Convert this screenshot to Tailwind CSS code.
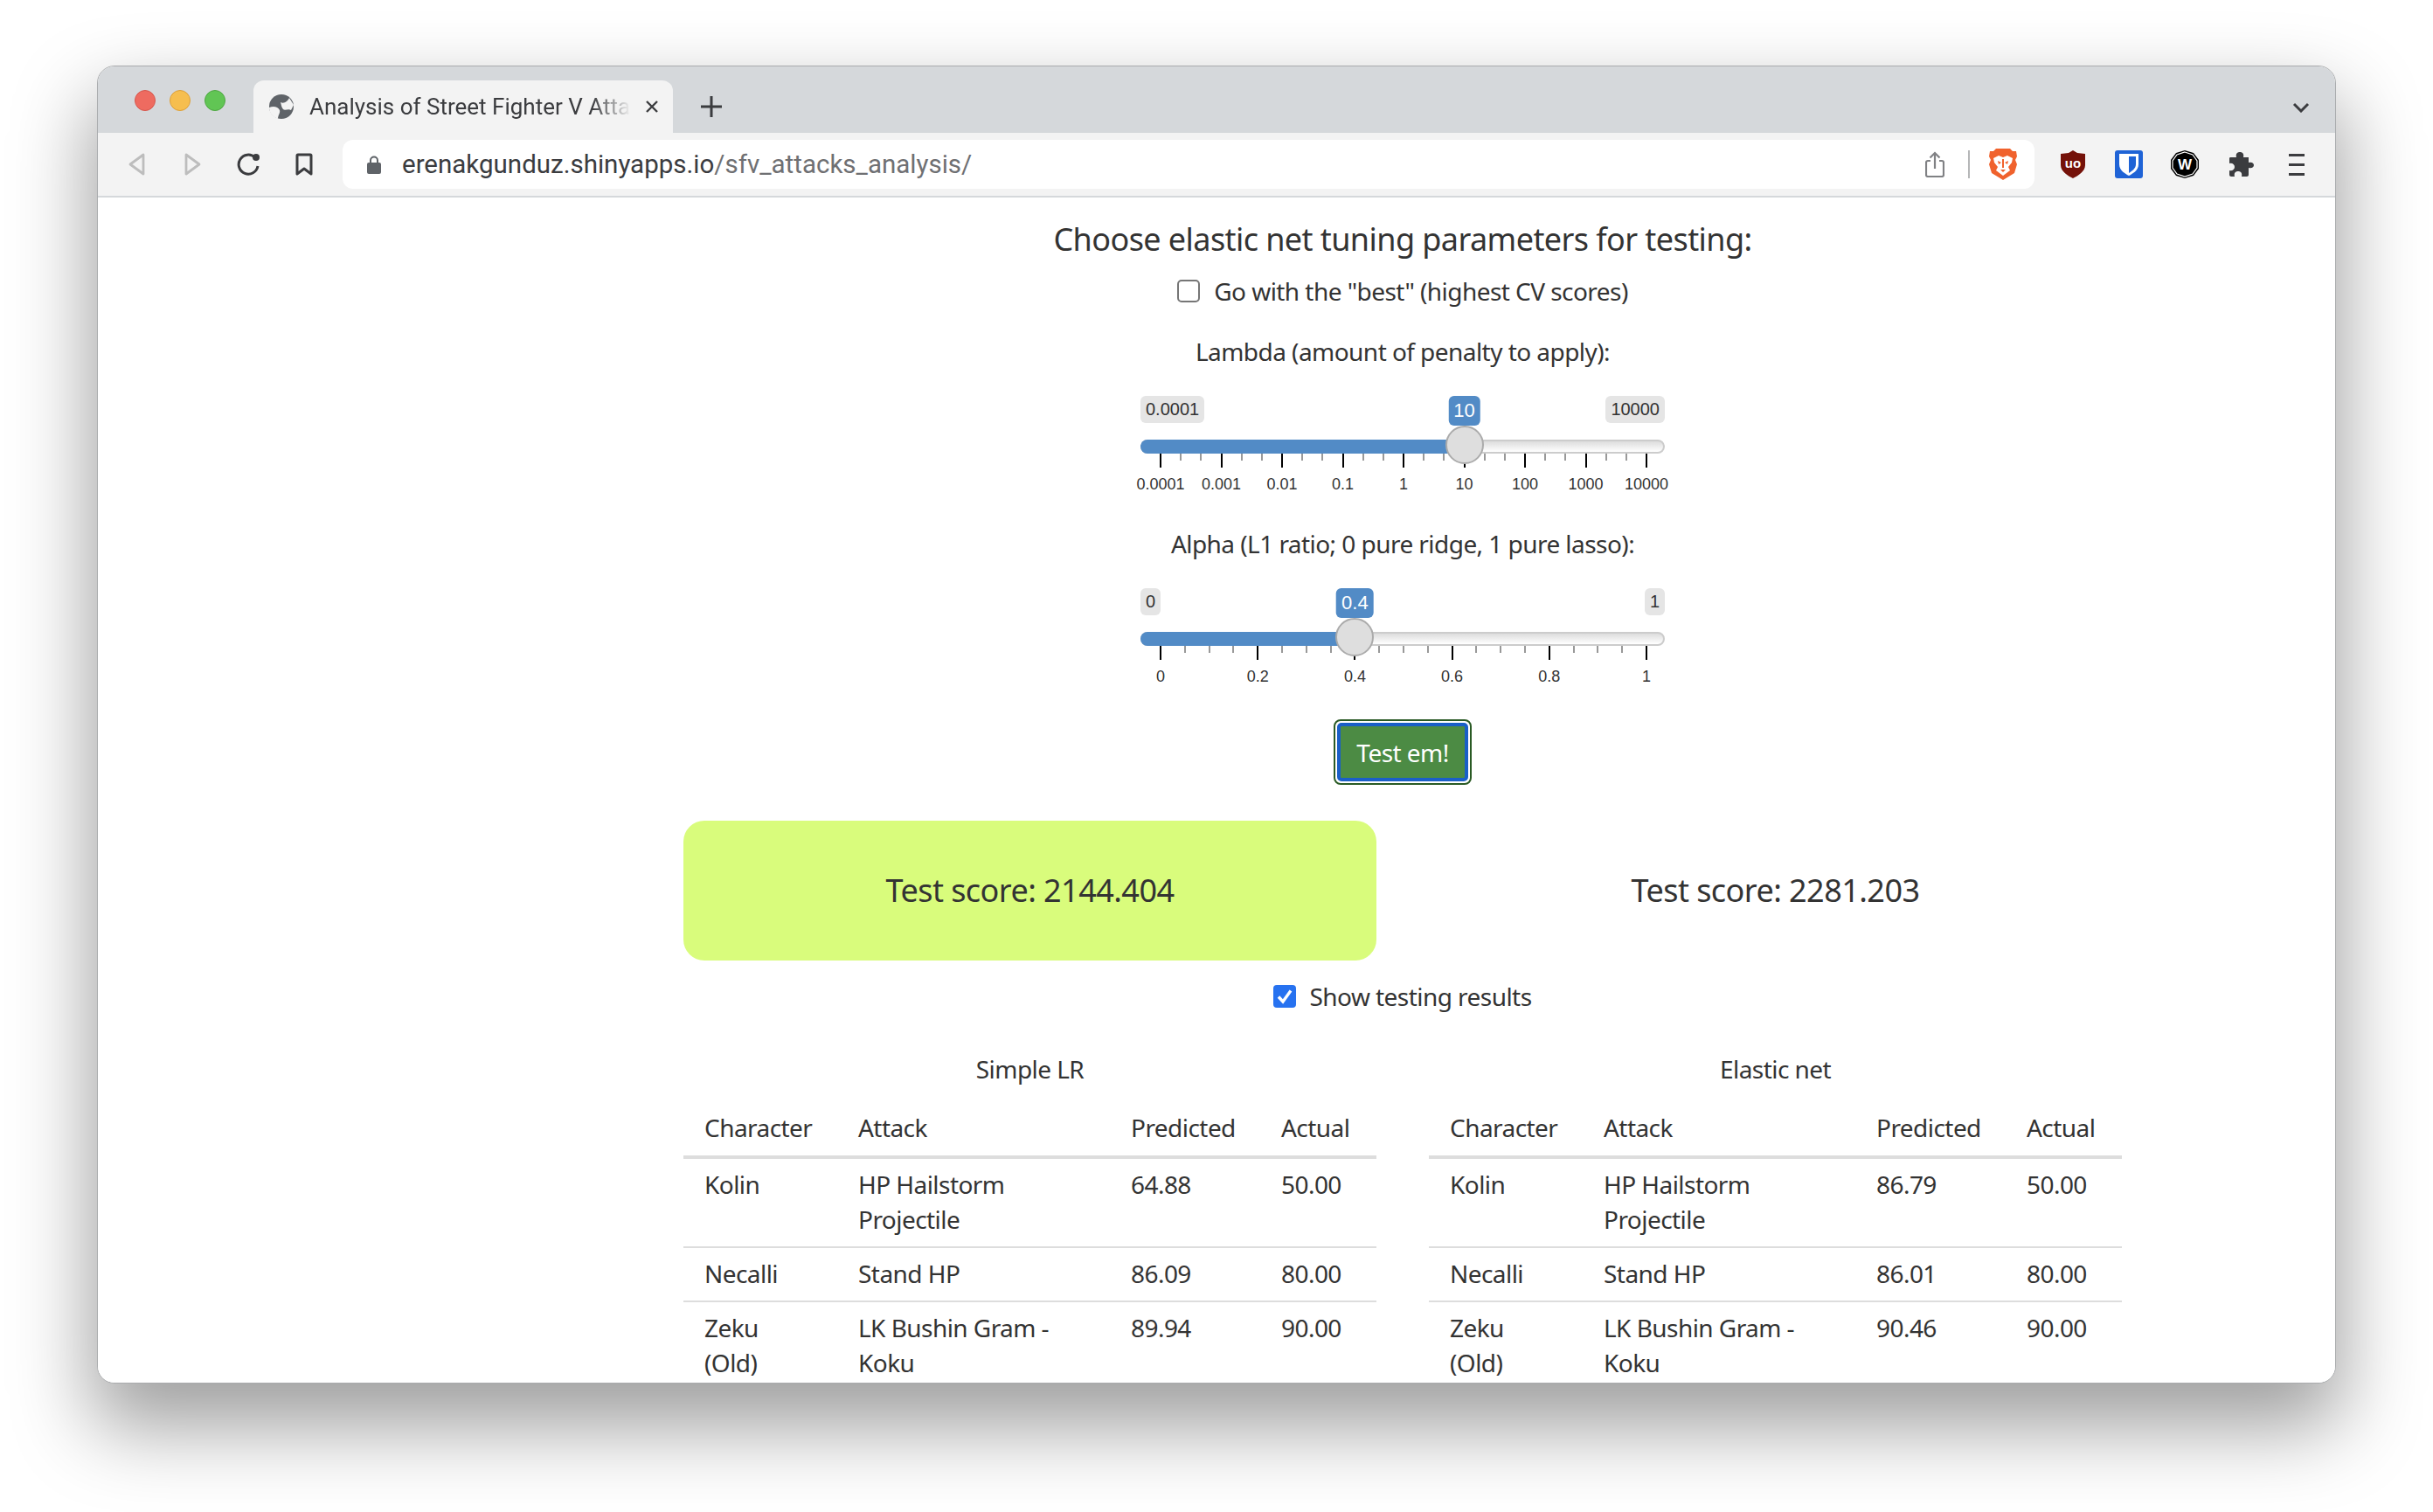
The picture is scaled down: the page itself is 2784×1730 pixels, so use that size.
<!DOCTYPE html>
<html lang="en">
<head>
    <meta charset="UTF-8">
    <title>Analysis of Street Fighter V Attacks</title>
    <script src="https://cdn.jsdelivr.net/npm/@tailwindcss/browser@4"></script>
</head>
<body class="bg-white w-[2784px] h-[1730px] overflow-hidden pt-[75px] pl-[111px]">
    <div class="w-[2562px] h-[1508px] flex flex-col rounded-[20px] overflow-hidden border border-[#a9abad] bg-white shadow-[0_44px_90px_6px_rgba(0,0,0,0.38)]">

        <!-- tab strip -->
        <div class="h-[76px] shrink-0 bg-[#d5d8db] flex items-end font-['Roboto',sans-serif]">
            <div class="flex items-center gap-4 w-[122px] h-[24px] pl-[42px] shrink-0 self-start mt-[27px]">
                <span class="w-6 h-6 rounded-full shrink-0 bg-[#ee6b60] border border-[#d5574d]"></span>
                <span class="w-6 h-6 rounded-full shrink-0 bg-[#f6be4f] border border-[#dda03a]"></span>
                <span class="w-6 h-6 rounded-full shrink-0 bg-[#61c554] border border-[#4fa643]"></span>
            </div>
            <div class="ml-[56px] w-[480px] h-[60px] bg-[#f3f3f3] rounded-t-[12px] flex items-center pl-[18px] pr-[16px] text-[#3b3c3f] text-[26px] shrink-0">
                <svg class="w-[28px] h-[28px] shrink-0" viewBox="0 0 28 28">
                    <circle cx="14" cy="14" r="14" fill="#5f6368"/>
                    <path d="M13 9 C17 11 21 8 23 4 L28 12 L25 18 C22 16 18 19 16 17 C14 15 14 12 13 9Z" fill="#f3f3f3"/>
                    <path d="M0 15 C5 13 10 14 12 18 C13 21 10 24 10 28 L6 26 C3 24 0 20 0 15Z" fill="#f3f3f3"/>
                </svg>
                <span class="ml-[18px] w-[368px] whitespace-nowrap [mask-image:linear-gradient(to_right,black_88%,transparent)]">Analysis of Street Fighter V Atta</span>
                <svg class="w-4 h-4 ml-auto shrink-0" viewBox="0 0 16 16"><path d="M2 2 14 14M14 2 2 14" stroke="#3b3c3f" stroke-width="2.4"/></svg>
            </div>
            <svg class="w-6 h-6 ml-[32px] mb-[18px] shrink-0" viewBox="0 0 24 24"><path d="M12 0V24M0 12H24" stroke="#3b3c3f" stroke-width="3"/></svg>
            <svg class="w-[20px] h-[12px] ml-auto mr-[29px] mb-[23px] shrink-0" viewBox="0 0 20 12"><path d="M2 2 10 10 18 2" fill="none" stroke="#3b3c3f" stroke-width="3"/></svg>
        </div>

        <!-- toolbar -->
        <div class="h-[74px] shrink-0 bg-[#f3f3f3] border-b-2 border-[#d5d8db] flex items-center">
            <div class="w-[280px] h-full flex items-center shrink-0">
                <svg class="ml-[35px] w-[19px] h-[26px]" viewBox="0 0 19 26"><path d="M17 2V24L2 13Z" fill="none" stroke="#bdbdbd" stroke-width="2.8" stroke-linejoin="round"/></svg>
                <svg class="ml-[45px] w-[19px] h-[26px]" viewBox="0 0 19 26"><path d="M2 2V24L17 13Z" fill="none" stroke="#bdbdbd" stroke-width="2.8" stroke-linejoin="round"/></svg>
                <svg class="ml-[41px] w-[26px] h-[26px]" viewBox="0 0 26 26"><path d="M20.8 5.2 A11 11 0 1 0 24 15" fill="none" stroke="#3b3c3f" stroke-width="3"/><circle cx="22" cy="5" r="4" fill="#3b3c3f"/></svg>
                <svg class="ml-[41px] w-[20px] h-[26px]" viewBox="0 0 20 26"><path d="M2 3Q2 2 3 2H17Q18 2 18 3V24L10 18 2 24Z" fill="none" stroke="#3b3c3f" stroke-width="3" stroke-linejoin="round"/></svg>
            </div>
            <div class="w-[1936px] h-[56px] bg-white rounded-[12px] flex items-center shrink-0 pr-[20px]">
                <svg class="ml-[28px] w-[16px] h-[21px] shrink-0" viewBox="0 0 16 21"><path d="M4 9V5.5a4 4 0 0 1 8 0V9" fill="none" stroke="#5f6368" stroke-width="2"/><rect x="0" y="8" width="16" height="13" rx="2" fill="#5f6368"/></svg>
                <span class="ml-[24px] text-[29.5px] whitespace-nowrap font-['Roboto',sans-serif] text-[#3b3c3f]">erenakgunduz.shinyapps.io<span class="text-[#6f7073]">/sfv_attacks_analysis/</span></span>
                <svg class="ml-auto w-[22px] h-[30px]" viewBox="0 0 22 30"><path d="M6 11H3a2 2 0 0 0-2 2V27a2 2 0 0 0 2 2H19a2 2 0 0 0 2-2V13a2 2 0 0 0-2-2H16M11 20V2M5.500 7.500 11 2 16.500 7.500" fill="none" stroke="#808184" stroke-width="2.200"/></svg>
                <span class="ml-[27px] w-[2px] h-[32px] bg-[#b5b6b7]"></span>
                <svg class="ml-[22px] w-[32px] h-[36px]" viewBox="0 0 32 36">
                    <path d="M8 0H24L27 3 31 3 32 9 30 13 32 18 29 28 16 36 3 28 0 18 2 13 0 9 1 3 5 3Z" fill="#f0622d"/>
                    <path d="M5 11 11 8 16 10 21 8 27 11 26 16 22 21 24 25 16 31 8 25 10 21 6 16Z" fill="#fff"/>
                    <path d="M10 14 14 16 11 18ZM22 14 18 16 21 18ZM13 24H19L16 27ZM15 12H17V22H15Z" fill="#f0622d"/>
                </svg>
            </div>
            <svg class="ml-[30px] w-[28px] h-[32px] shrink-0" viewBox="0 0 28 32"><path d="M14 0 19 3 28 4V17C28 24 20 29 14 32 8 29 0 24 0 17V4L9 3Z" fill="#741109"/><text x="14" y="20" text-anchor="middle" font-family="Liberation Sans" font-weight="700" font-size="15" fill="#fff">uo</text></svg>
            <svg class="ml-[34px] w-[32px] h-[32px] shrink-0" viewBox="0 0 32 32"><rect width="32" height="32" rx="3" fill="#1f63d6"/><path d="M5 4H27V16C27 23 20 27 16 29 12 27 5 23 5 16Z" fill="#fff"/><path d="M16 7H24V16C24 21 19 24 16 26Z" fill="#1f63d6"/></svg>
            <svg class="ml-[32px] w-[32px] h-[32px] shrink-0" viewBox="0 0 32 32"><path d="M16 0 26 3 32 11V21L26 29 16 32 6 29 0 21V11L6 3Z" fill="#000"/><path d="M16 2 25 5 30 12V20L25 27 16 30 7 27 2 20V12L7 5Z" fill="none" stroke="#fff" stroke-width="1.200"/><text x="16" y="22" text-anchor="middle" font-family="Liberation Sans" font-weight="700" font-size="17" fill="#fff">W</text></svg>
            <svg class="ml-[34px] w-[29px] h-[28px] shrink-0" viewBox="0 0 29 28"><path d="M2 6H9C8 2 10 0 13 0S18 2 17 6H23V12C27 11 29 13 29 15S27 19 23 18V26C23 27 22 28 21 28H15C16 24 14 22 11 22S6 24 7 28H3C2 28 1 27 1 26V21C4 22 7 20 7 17S4 12 1 13V8C1 7 1 6 2 6Z" fill="#3b3c3f"/></svg>
            <svg class="ml-[40px] w-[18px] h-[25px] shrink-0" viewBox="0 0 18 25"><path d="M0 1.500H18M0 12.500H18M0 23.500H18" stroke="#3b3c3f" stroke-width="3"/></svg>
        </div>

        <!-- page -->
        <main class="flex-1 overflow-hidden bg-white text-[#333333] text-[28px] leading-[40px] font-['Noto_Sans',sans-serif] tracking-[-0.55px]">
            <div class="w-[1646px] ml-[670px] flex flex-col items-center">
                <h4 class="mt-[26px] text-[36px] leading-[44px] tracking-[-0.58px]">Choose elastic net tuning parameters for testing:</h4>
                <label class="mt-[17px] flex items-center h-[40px]">
                    <span class="w-[26px] h-[26px] rounded-[5px] border-2 border-[#767676] bg-white"></span>
                    <span class="ml-[16px] leading-[38px]">Go with the "best" (highest CV scores)</span>
                </label>

                <div class="mt-[30px] h-[40px] leading-[38px]">Lambda (amount of penalty to apply):</div>
                <div id="lambdaSlider" class="mt-[30px] relative w-[600px] h-[150px] font-['Liberation_Sans',sans-serif] tracking-normal"></div>

                <div class="h-[40px] leading-[38px]">Alpha (L1 ratio; 0 pure ridge, 1 pure lasso):</div>
                <div id="alphaSlider" class="mt-[30px] relative w-[600px] h-[144px] font-['Liberation_Sans',sans-serif] tracking-normal"></div>

                <button class="mt-[6px] w-[158px] h-[75px] rounded-[8px] border-2 border-[#2a5a24] bg-white p-[2px]">
                    <span class="flex w-full h-full items-center justify-center rounded-[5px] border-[4px] border-[#1a5fc8] bg-[#4c8b44] text-white leading-[38px]">Test em!</span>
                </button>

                <div class="mt-[41px] w-full grid grid-cols-[793px_793px] gap-x-[60px]">
                    <div class="h-[160px] rounded-[24px] bg-[#d9fc7c] flex items-center justify-center text-[36px]">Test score: 2144.404</div>
                    <div class="h-[160px] flex items-center justify-center text-[36px]">Test score: 2281.203</div>
                </div>

                <label class="mt-[28px] flex items-center h-[26px]">
                    <svg class="w-[26px] h-[26px]" viewBox="0 0 26 26"><rect width="26" height="26" rx="4" fill="#2772f0"/><path d="M6 13.500 11 19 20 6.500" fill="none" stroke="#fff" stroke-width="3.400"/></svg>
                    <span class="ml-[15px] leading-[24px]">Show testing results</span>
                </label>

                <div class="mt-[51px] w-full grid grid-cols-[793px_793px] gap-x-[60px]" id="tables"></div>
            </div>
        </main>
    </div>

    <script>
        const rows = {
            left: [
                ['Kolin', 'HP Hailstorm Projectile', '64.88', '50.00'],
                ['Necalli', 'Stand HP', '86.09', '80.00'],
                ['Zeku<br>(Old)', 'LK Bushin Gram - Koku', '89.94', '90.00']
            ],
            right: [
                ['Kolin', 'HP Hailstorm Projectile', '86.79', '50.00'],
                ['Necalli', 'Stand HP', '86.01', '80.00'],
                ['Zeku<br>(Old)', 'LK Bushin Gram - Koku', '90.46', '90.00']
            ]
        };

        function renderTable(title, data) {
            const body = data.map(row => `
                <tr class="border-b-2 border-[#dddddd] last:border-b-0">
                    <td class="px-6 pt-[9px] pb-[11px] align-top">${row[0]}</td>
                    <td class="px-6 pt-[9px] pb-[11px] align-top">${row[1]}</td>
                    <td class="px-6 pt-[9px] pb-[11px] align-top">${row[2]}</td>
                    <td class="px-6 pt-[9px] pb-[11px] align-top">${row[3]}</td>
                </tr>`).join('');
            return `<div>
                <div class="text-center h-[40px] leading-[38px]">${title}</div>
                <table class="w-full table-fixed mt-[26px] font-normal">
                    <colgroup><col class="w-[176px]"><col class="w-[312px]"><col class="w-[172px]"><col class="w-[133px]"></colgroup>
                    <thead>
                        <tr class="border-b-4 border-[#dddddd]">
                            <th class="px-6 h-[50px] pb-[12px] text-left font-normal">Character</th>
                            <th class="px-6 h-[50px] pb-[12px] text-left font-normal">Attack</th>
                            <th class="px-6 h-[50px] pb-[12px] text-left font-normal">Predicted</th>
                            <th class="px-6 h-[50px] pb-[12px] text-left font-normal">Actual</th>
                        </tr>
                    </thead>
                    <tbody>${body}</tbody>
                </table>
            </div>`;
        }

        document.getElementById('tables').innerHTML =
            renderTable('Simple LR', rows.left) + renderTable('Elastic net', rows.right);

        // ion.rangeSlider look: track runs 23px..579px inside a 600px box
        function renderSlider(id, labels, valueIndex, minors, minLabel, maxLabel, valueLabel) {
            const last = labels.length - 1;
            const pos = i => 23 + (i / last) * 556;
            const handle = pos(valueIndex);
            let html = `
                <span class="absolute left-0 top-0 h-[31px] px-[6px] rounded-[6px] bg-[#e5e5e5] text-[20px] leading-[31px] text-[#333333]">${minLabel}</span>
                <span class="absolute right-0 top-0 h-[31px] px-[6px] rounded-[6px] bg-[#e5e5e5] text-[20px] leading-[31px] text-[#333333]">${maxLabel}</span>
                <span class="absolute top-0 h-[34px] px-[6px] -translate-x-1/2 rounded-[6px] bg-[#528bc6] text-[22px] leading-[34px] text-white" style="left:${handle}px">${valueLabel}</span>
                <div class="absolute left-0 right-0 top-[50px] h-[16px] rounded-[8px] border-2 border-[#cccccc] bg-linear-to-b from-[#dddddd] to-white"></div>
                <div class="absolute left-0 top-[50px] h-[16px] rounded-l-[8px] bg-[#528bc6]" style="width:${handle}px"></div>`;
            labels.forEach((label, i) => {
                html += `<span class="absolute top-[66px] w-[2px] h-[16px] bg-black -translate-x-1/2" style="left:${pos(i)}px"></span>`;
                html += `<span class="absolute top-[89px] text-[18px] leading-[24px] text-[#333333] -translate-x-1/2 whitespace-nowrap" style="left:${pos(i)}px">${label}</span>`;
                if (i < last) {
                    for (let m = 1; m <= minors; m++) {
                        html += `<span class="absolute top-[66px] w-[2px] h-[8px] bg-[#999999] -translate-x-1/2" style="left:${pos(i + m / (minors + 1))}px"></span>`;
                    }
                }
            });
            html += `<span class="absolute top-[34px] w-[44px] h-[44px] -translate-x-1/2 rounded-full border-2 border-[#ababab] bg-[#dedede]" style="left:${handle}px"></span>`;
            document.getElementById(id).innerHTML = html;
        }

        renderSlider('lambdaSlider', ['0.0001', '0.001', '0.01', '0.1', '1', '10', '100', '1000', '10000'], 5, 2, '0.0001', '10000', '10');
        renderSlider('alphaSlider', ['0', '0.2', '0.4', '0.6', '0.8', '1'], 2, 3, '0', '1', '0.4');
    </script>
</body>
</html>
